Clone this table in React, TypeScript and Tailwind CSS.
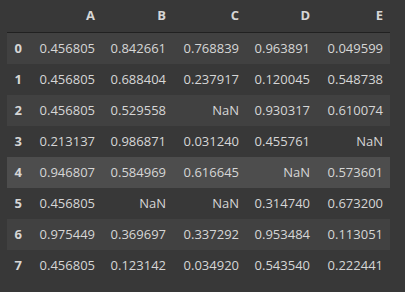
import React from "react";

const columns = ["A", "B", "C", "D", "E"];
const widths = ["w-[73px]", "w-[71px]", "w-[73px]", "w-[71px]", "w-[73px]"];

const rows: string[][] = [
  ["0.456805", "0.842661", "0.768839", "0.963891", "0.049599"],
  ["0.456805", "0.688404", "0.237917", "0.120045", "0.548738"],
  ["0.456805", "0.529558", "NaN", "0.930317", "0.610074"],
  ["0.213137", "0.986871", "0.031240", "0.455761", "NaN"],
  ["0.946807", "0.584969", "0.616645", "NaN", "0.573601"],
  ["0.456805", "NaN", "NaN", "0.314740", "0.673200"],
  ["0.975449", "0.369697", "0.337292", "0.953484", "0.113051"],
  ["0.456805", "0.123142", "0.034920", "0.543540", "0.222441"],
];

const hovered = 4;

export default function App() {
  return (
    <div
      className="w-[405px] h-[292px] bg-[#383838] text-[#d6d6d6] text-[13px] pl-[7px]"
      style={{ fontFamily: "'Open Sans', 'Noto Sans', sans-serif" }}
    >
      <div className="flex h-[33px] items-center border-b border-[#212121] w-[383px] font-bold">
        <div className="w-[22px]" />
        {columns.map((c, i) => (
          <div key={c} className={`${widths[i]} text-right pr-[7px]`}>
            {c}
          </div>
        ))}
      </div>
      {rows.map((row, r) => (
        <div
          key={r}
          className={`flex h-[31px] items-center w-[383px] ${
            r === hovered ? "bg-[#4d4d4d]" : r % 2 === 0 ? "bg-[#414141]" : ""
          }`}
        >
          <div className="w-[22px] text-right pr-[7px] font-bold">{r}</div>
          {row.map((v, i) => (
            <div key={i} className={`${widths[i]} text-right pr-[7px]`}>
              {v}
            </div>
          ))}
        </div>
      ))}
    </div>
  );
}
